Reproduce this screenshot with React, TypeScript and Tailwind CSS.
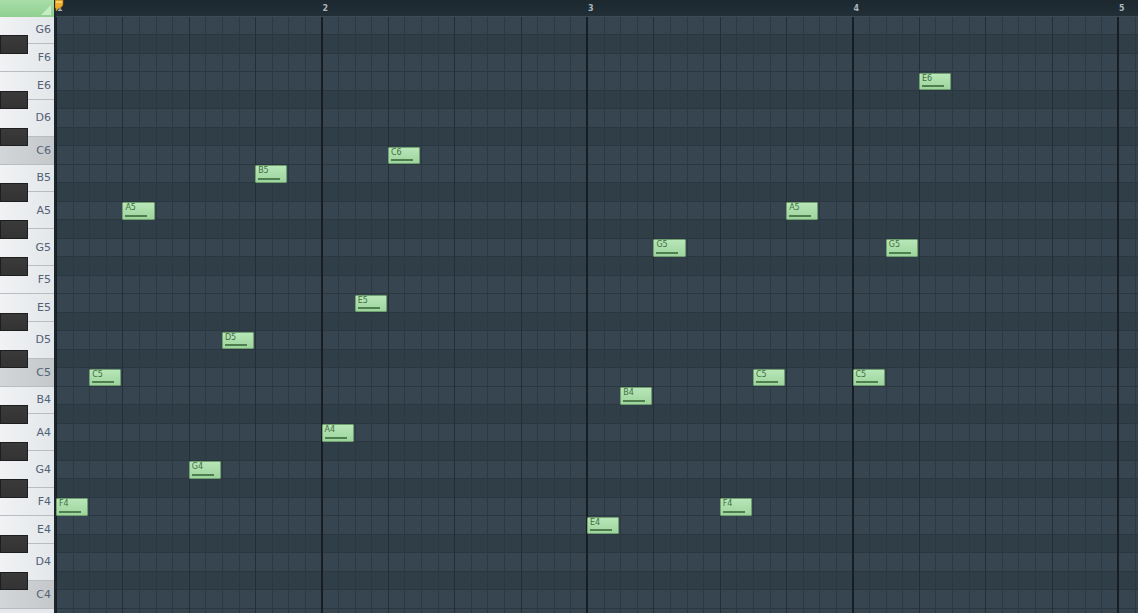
import React from 'react';

const ROW = 18.5;
const STEP = 265.5 / 16;

// rows from the top of the grid, G6 down to B3
const ROWS = [
  'G6', 'F#6', 'F6', 'E6', 'D#6', 'D6', 'C#6', 'C6',
  'B5', 'A#5', 'A5', 'G#5', 'G5', 'F#5', 'F5', 'E5', 'D#5', 'D5', 'C#5', 'C5',
  'B4', 'A#4', 'A4', 'G#4', 'G4', 'F#4', 'F4', 'E4', 'D#4', 'D4', 'C#4', 'C4',
  'B3', 'A#3',
];

const WHITE_KEYS: { name: string; h: number }[] = [
  { name: 'G6', h: 27.75 },
  { name: 'F6', h: 27.75 },
  { name: 'E6', h: 27.75 },
  { name: 'D6', h: 37 },
  { name: 'C6', h: 27.75 },
  { name: 'B5', h: 27.75 },
  { name: 'A5', h: 37 },
  { name: 'G5', h: 37 },
  { name: 'F5', h: 27.75 },
  { name: 'E5', h: 27.75 },
  { name: 'D5', h: 37 },
  { name: 'C5', h: 27.75 },
  { name: 'B4', h: 27.75 },
  { name: 'A4', h: 37 },
  { name: 'G4', h: 37 },
  { name: 'F4', h: 27.75 },
  { name: 'E4', h: 27.75 },
  { name: 'D4', h: 37 },
  { name: 'C4', h: 27.75 },
];

const NOTES: { name: string; step: number }[] = [
  { name: 'F4', step: 0 },
  { name: 'C5', step: 2 },
  { name: 'A5', step: 4 },
  { name: 'G4', step: 8 },
  { name: 'D5', step: 10 },
  { name: 'B5', step: 12 },
  { name: 'A4', step: 16 },
  { name: 'E5', step: 18 },
  { name: 'C6', step: 20 },
  { name: 'E4', step: 32 },
  { name: 'B4', step: 34 },
  { name: 'G5', step: 36 },
  { name: 'F4', step: 40 },
  { name: 'C5', step: 42 },
  { name: 'A5', step: 44 },
  { name: 'C5', step: 48 },
  { name: 'G5', step: 50 },
  { name: 'E6', step: 52 },
];

const font = { fontFamily: '"DejaVu Sans", "Liberation Sans", sans-serif' };

function Ruler() {
  return (
    <div className="flex h-[16.5px] shrink-0">
      {/* corner */}
      <div className="relative w-[56px] shrink-0 bg-gradient-to-b from-[#a9dea9] to-[#8fcf8f] border-r-2 border-[#1b252c]">
        <div className="absolute right-[3px] bottom-[2px] w-0 h-0 border-l-[10px] border-l-transparent border-b-[10px] border-b-[#c6ecc6]" />
      </div>
      <div className="relative flex-1 bg-gradient-to-b from-[#1c272e] to-[#222f37] border-b border-[#3a4c54]">
        {[1, 2, 3, 4, 5].map((n, i) => (
          <span
            key={n}
            className="absolute top-[5px] text-[8px] font-bold leading-none text-[#a9b4bb]"
            style={{ ...font, left: i * 265.5 + 1 }}
          >
            {n}
          </span>
        ))}
        {/* playhead marker */}
        <svg className="absolute -left-[1px] top-0" width="9" height="11" viewBox="0 0 9 11">
          <path d="M0 0 H8 V4 Q8 7 4 8 L1 11 V8 H0 Z" fill="#eeac2c" stroke="#b87a12" strokeWidth="0.6" />
          <path d="M1 1 H7 V3 H1 Z" fill="#f8d06a" />
        </svg>
      </div>
    </div>
  );
}

function Keyboard() {
  return (
    <div className="relative w-[56px] shrink-0 overflow-hidden border-r-2 border-[#1b252c] bg-[#e6e9ec]">
      <div className="flex flex-col">
        {WHITE_KEYS.map((k) => (
          <div
            key={k.name}
            className={`flex items-center justify-end pr-[3px] border-b border-[#b9bdc2] ${
              k.name.startsWith('C')
                ? 'bg-gradient-to-r from-[#d3d6d9] to-[#c4c8cb]'
                : 'bg-gradient-to-r from-[#f0f2f4] to-[#e4e7ea]'
            }`}
            style={{ height: k.h }}
          >
            <span className="text-[11px] leading-none text-[#526276]" style={font}>
              {k.name}
            </span>
          </div>
        ))}
      </div>
      {ROWS.map((r, i) =>
        r.includes('#') ? (
          <div
            key={r}
            className="absolute left-0 w-[28px] bg-gradient-to-b from-[#3a3a3a] to-[#333333] border border-[#1e1e1e]"
            style={{ top: i * ROW, height: ROW }}
          />
        ) : null,
      )}
    </div>
  );
}

function Note({ name, step }: { name: string; step: number }) {
  const row = ROWS.indexOf(name);
  return (
    <div
      className="absolute flex flex-col justify-between rounded-[1px] border border-[#6f9f6f] bg-gradient-to-b from-[#b8e6b8] to-[#9dd49d] px-[2px] pt-[1px] pb-[2px]"
      style={{ left: step * STEP, top: row * ROW + 0.5, width: STEP * 2 - 1, height: ROW - 1 }}
    >
      <span className="text-[8px] leading-none text-[#3f6e3f]" style={font}>
        {name}
      </span>
      <div className="h-[2px] w-[22px] bg-[#4f7f4f]" />
    </div>
  );
}

function Grid() {
  const cols = Array.from({ length: 66 }, (_, i) => i);
  return (
    <div className="relative flex-1 overflow-hidden bg-[#35444e]">
      <div className="flex flex-col">
        {ROWS.map((r) => (
          <div
            key={r}
            className={`h-[18.5px] shrink-0 border-b border-[#2a3740] ${
              r.includes('#') ? 'bg-[#303e48]' : 'bg-[#36454f]'
            }`}
          />
        ))}
      </div>
      {cols.map((i) => (
        <div
          key={i}
          className={`absolute top-0 bottom-0 ${
            i % 16 === 0
              ? 'w-[2px] bg-[#161e24]'
              : i % 4 === 0
                ? 'w-px bg-[#232e36]'
                : 'w-px bg-[#2c3942]'
          }`}
          style={{ left: i * STEP - (i % 16 === 0 ? 1 : 0) }}
        />
      ))}
      {NOTES.map((n, i) => (
        <Note key={i} name={n.name} step={n.step} />
      ))}
    </div>
  );
}

export default function App() {
  return (
    <div className="w-[1138px] h-[613px] overflow-hidden flex flex-col bg-[#35444e]">
      <Ruler />
      <div className="flex flex-1 min-h-0">
        <Keyboard />
        <Grid />
      </div>
    </div>
  );
}
